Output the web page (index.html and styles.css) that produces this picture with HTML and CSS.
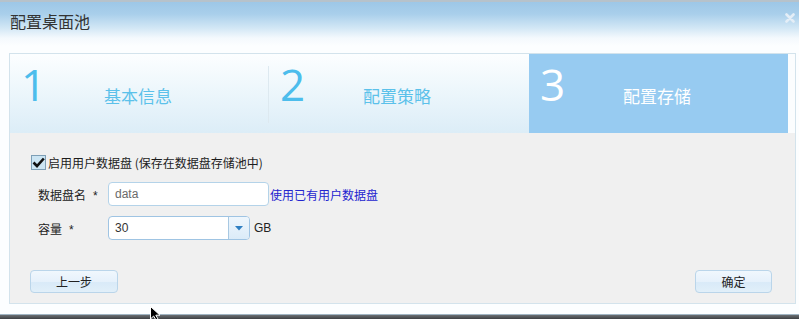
FILE: index.html
```html
<!DOCTYPE html>
<html lang="zh-CN">
<head>
<meta charset="utf-8">
<title>配置桌面池</title>
<link rel="stylesheet" href="styles.css">
</head>
<body>
<div class="window">
  <div class="titlebar">
    <span class="title">配置桌面池</span>
    <svg class="close" width="10" height="10" viewBox="0 0 10 10"><path d="M1.5 1.5 L8.5 8.5 M8.5 1.5 L1.5 8.5" stroke="#e4eef7" stroke-width="2.6" stroke-linecap="round"/></svg>
  </div>
  <div class="panel">
    <div class="steps">
      <div class="step"><span class="num">1</span><span class="label">基本信息</span></div>
      <div class="step"><span class="num">2</span><span class="label">配置策略</span></div>
      <div class="step active"><span class="num">3</span><span class="label">配置存储</span></div>
      <div class="step-fill"></div>
    </div>
    <div class="content">
      <label class="check-row">
        <span class="checkbox"><svg width="13" height="13" viewBox="0 0 13 13"><path d="M1.5 6.5 L5 10 L11.8 2.5" fill="none" stroke="#111" stroke-width="2.6"/></svg></span>
        <span>启用用户数据盘 (保存在数据盘存储池中)</span>
      </label>
      <div class="form-row">
        <span class="field-label">数据盘名<span class="req">*</span></span>
        <span class="input">data</span>
        <a class="link">使用已有用户数据盘</a>
      </div>
      <div class="form-row">
        <span class="field-label">容量<span class="req">*</span></span>
        <span class="combo"><span class="combo-text">30</span><span class="combo-btn"><svg width="8" height="5" viewBox="0 0 8 5"><path d="M0 0 H8 L4 4.5 Z" fill="#2f7fc2"/></svg></span></span>
        <span class="unit">GB</span>
      </div>
      <div class="actions">
        <button class="btn prev">上一步</button>
        <button class="btn ok">确定</button>
      </div>
    </div>
  </div>
</div>
<div class="taskbar"></div>
<svg class="cursor" width="12" height="14" viewBox="0 0 12 14"><path d="M0.5 0.5 L0.5 13 L3.6 10 L6 14 L8 13 L5.8 9.2 L10 9.2 Z" fill="#000" stroke="#fff" stroke-width="1"/></svg>
</body>
</html>
```
FILE: styles.css
```css
* { box-sizing: border-box; }
html, body { margin: 0; padding: 0; }
body {
  width: 799px;
  height: 319px;
  overflow: hidden;
  background: #fff;
  font-family: "Noto Sans CJK SC", "Liberation Sans", sans-serif;
  font-size: 12px;
  color: #222;
  position: relative;
}
.window {
  height: 314px;
  display: flex;
  flex-direction: column;
  background: #fcfeff;
}
.titlebar {
  height: 53px;
  flex: none;
  border-top: 2px solid #b6c2cb;
  background: linear-gradient(to bottom, #9dc7e7 0px, #a9cfeb 12px, #d2e7f5 26px, #f4f9fd 36px, #fcfeff 44px);
  display: flex;
  align-items: flex-start;
  justify-content: space-between;
  padding: 9px 4px 0 10px;
}
.title {
  font-size: 16px;
  color: #333;
  line-height: 20px;
}
.close { margin-top: 2px; }
.panel {
  margin: 0 3px 10px 9px;
  flex: 1;
  border: 1px solid #d3e3ec;
  display: flex;
  flex-direction: column;
}
.steps {
  height: 79px;
  flex: none;
  display: grid;
  grid-template-columns: 259px 260px 259px 1fr;
  background: linear-gradient(to bottom, #fcfeff 0%, #eaf5fb 55%, #dcedf7 100%);
}
.step {
  position: relative;
  display: flex;
  align-items: flex-start;
  color: #4dbdec;
}
.step + .step::before {
  content: "";
  position: absolute;
  left: -1px;
  top: 12px;
  height: 57px;
  width: 1px;
  background: #dde9f0;
}
.step.active::before { display: none; }
.num {
  width: 94px;
  padding-left: 11px;
  font-family: "Open Sans", "Liberation Sans", sans-serif;
  font-weight: 400;
  font-size: 44px;
  line-height: 45px;
  margin-top: 8px;
}
.label {
  font-size: 17px;
  line-height: 20px;
  margin-top: 32px;
  color: #5bc1ea;
}
.step.active {
  background: #97cbf1;
  color: #fff;
}
.step.active .label { color: #fff; }
.step-fill { background: #fbfdfe; }
.content {
  flex: 1;
  background: #f0f0f0;
  padding: 22px 0 10px 0;
  display: flex;
  flex-direction: column;
}
.check-row {
  display: flex;
  align-items: center;
  height: 15px;
  padding-left: 21px;
  gap: 2px;
  font-size: 12px;
  color: #1c1c1c;
}
.checkbox {
  width: 15px;
  height: 15px;
  border: 1px solid #7e9fb6;
  background: #cce5f3;
  display: flex;
  align-items: center;
  justify-content: center;
}
.form-row {
  display: flex;
  align-items: center;
  height: 24px;
  padding-left: 28px;
  margin-top: 12px;
}
.form-row + .form-row { margin-top: 10px; }
.field-label {
  width: 70px;
  font-size: 12px;
  color: #222;
}
.req {
  margin-left: 7px;
  font-family: "Liberation Sans", sans-serif;
}
.input {
  width: 161px;
  height: 24px;
  border: 1px solid #b4d3e9;
  border-radius: 4px;
  background: #fff;
  padding: 0 6px;
  font-family: "Liberation Sans", sans-serif;
  font-size: 12px;
  line-height: 22px;
  color: #6a6a6a;
}
.link {
  font-size: 12px;
  color: #2424cf;
  margin-left: 1px;
}
.combo {
  width: 142px;
  height: 24px;
  border: 1px solid #9fc4e3;
  border-radius: 4px;
  background: #fff;
  display: flex;
  overflow: hidden;
}
.combo-text {
  flex: 1;
  padding: 0 6px;
  font-family: "Liberation Sans", sans-serif;
  font-size: 12px;
  line-height: 22px;
  color: #333;
}
.combo-btn {
  width: 21px;
  border-left: 1px solid #a8c8e2;
  background: linear-gradient(to bottom, #eef6fd, #dbebf8);
  display: flex;
  align-items: center;
  justify-content: center;
}
.unit {
  margin-left: 4px;
  font-family: "Liberation Sans", sans-serif;
  font-size: 12px;
  color: #222;
}
.actions {
  margin-top: 30px;
  padding: 0 23px 0 20px;
  display: flex;
  justify-content: space-between;
}
.btn {
  height: 23px;
  border: 1px solid #bad5ea;
  border-radius: 4px;
  background: linear-gradient(to bottom, #f0f7fd 0%, #e6f1fb 50%, #d9eaf8 55%, #e1eff9 100%);
  font-family: "Noto Sans CJK SC", sans-serif;
  font-size: 12px;
  color: #222;
  padding: 0;
  line-height: 21px;
}
.prev { width: 88px; }
.ok { width: 77px; }
.taskbar {
  height: 5px;
  border-top: 1px solid #9fb4c2;
  background: linear-gradient(to bottom, #6b6f73, #3d4043);
}
.cursor {
  position: absolute;
  left: 150px;
  top: 306px;
}
```
